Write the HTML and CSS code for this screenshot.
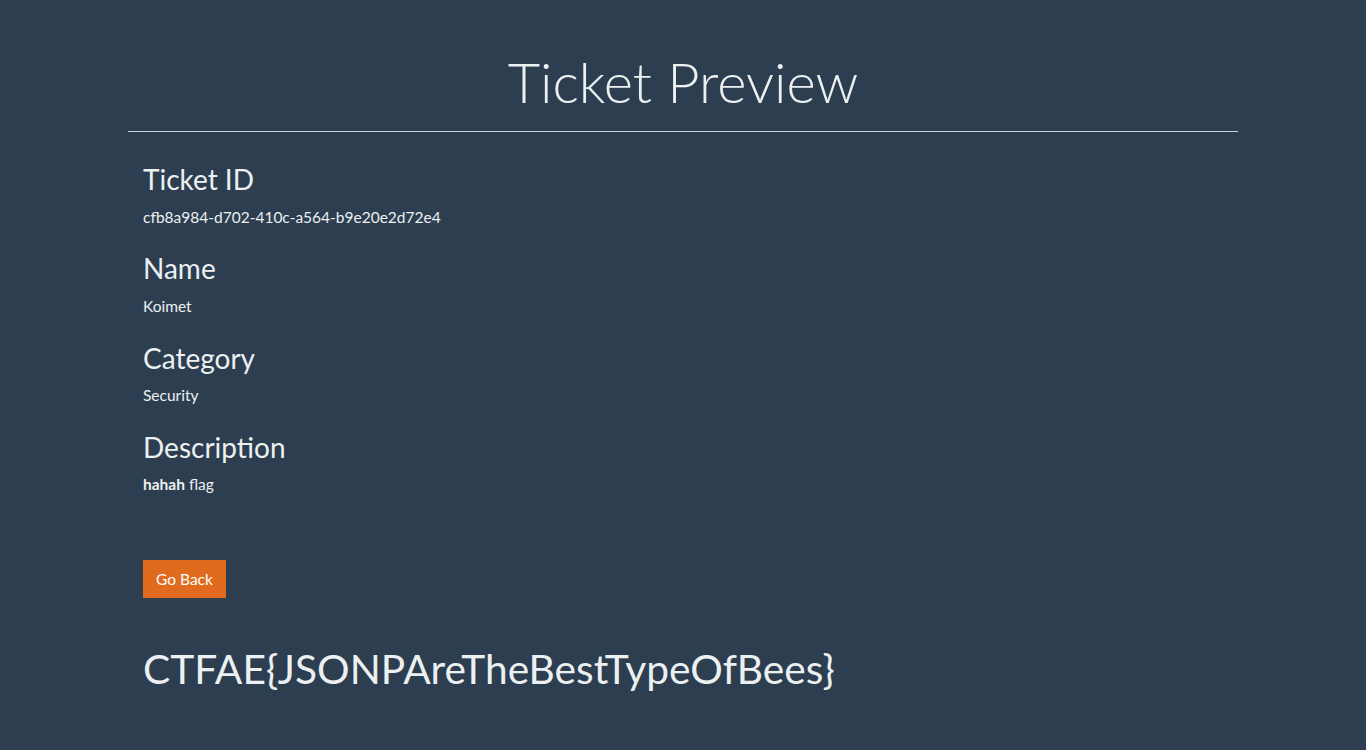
FILE: index.html
```html
<!DOCTYPE html>
<html>
<head>
<meta charset="utf-8">
<title>Ticket Preview</title>
<link rel="stylesheet" href="styles.css">
</head>
<body>
<div class="container">
  <h1 class="title">Ticket Preview</h1>
  <hr class="rule">
  <div class="content">
    <div class="field">
      <h3 class="label">Ticket ID</h3>
      <p class="value">cfb8a984-d702-410c-a564-b9e20e2d72e4</p>
    </div>
    <div class="field">
      <h3 class="label">Name</h3>
      <p class="value">Koimet</p>
    </div>
    <div class="field">
      <h3 class="label">Category</h3>
      <p class="value">Security</p>
    </div>
    <div class="field">
      <h3 class="label">Description</h3>
      <p class="value"><b>hahah</b> flag</p>
    </div>
    <a class="btn" href="#">Go Back</a>
    <h1 class="flag">CTFAE{JSONPAreTheBestTypeOfBees}</h1>
  </div>
</div>
</body>
</html>
```

FILE: styles.css
```css
html, body {
  margin: 0;
  padding: 0;
}
body {
  background: #2c3e50;
  color: #ecf0f1;
  font-family: Lato, "Open Sans", sans-serif;
  font-size: 15.5px;
  line-height: 24px;
}
.container {
  width: 1110px;
  margin: 0 auto;
  padding: 48px 15px 0;
}
.title {
  margin: 0;
  text-align: center;
  font-size: 56px;
  font-weight: 300;
  line-height: 1.2;
}
.rule {
  margin: 16px 0 0;
  border: 0;
  border-top: 1px solid #c8ced3;
}
.content {
  padding: 31px 15px 0;
}
.field {
  margin-bottom: 23.6px;
}
.label {
  margin: 0 0 8px;
  font-size: 28px;
  font-weight: 400;
  line-height: 1.2;
}
.value {
  margin: 0;
}
.value b {
  font-weight: 700;
}
.btn {
  display: inline-block;
  margin-top: 40px;
  padding: 6px 12px;
  background: #e06b1e;
  border: 1px solid #e06b1e;
  color: #fff;
  font-size: 15.5px;
  line-height: 24px;
  text-decoration: none;
}
.flag {
  margin: 47px 0 0;
  font-size: 40.7px;
  font-weight: 400;
  line-height: 1.2;
}
```
